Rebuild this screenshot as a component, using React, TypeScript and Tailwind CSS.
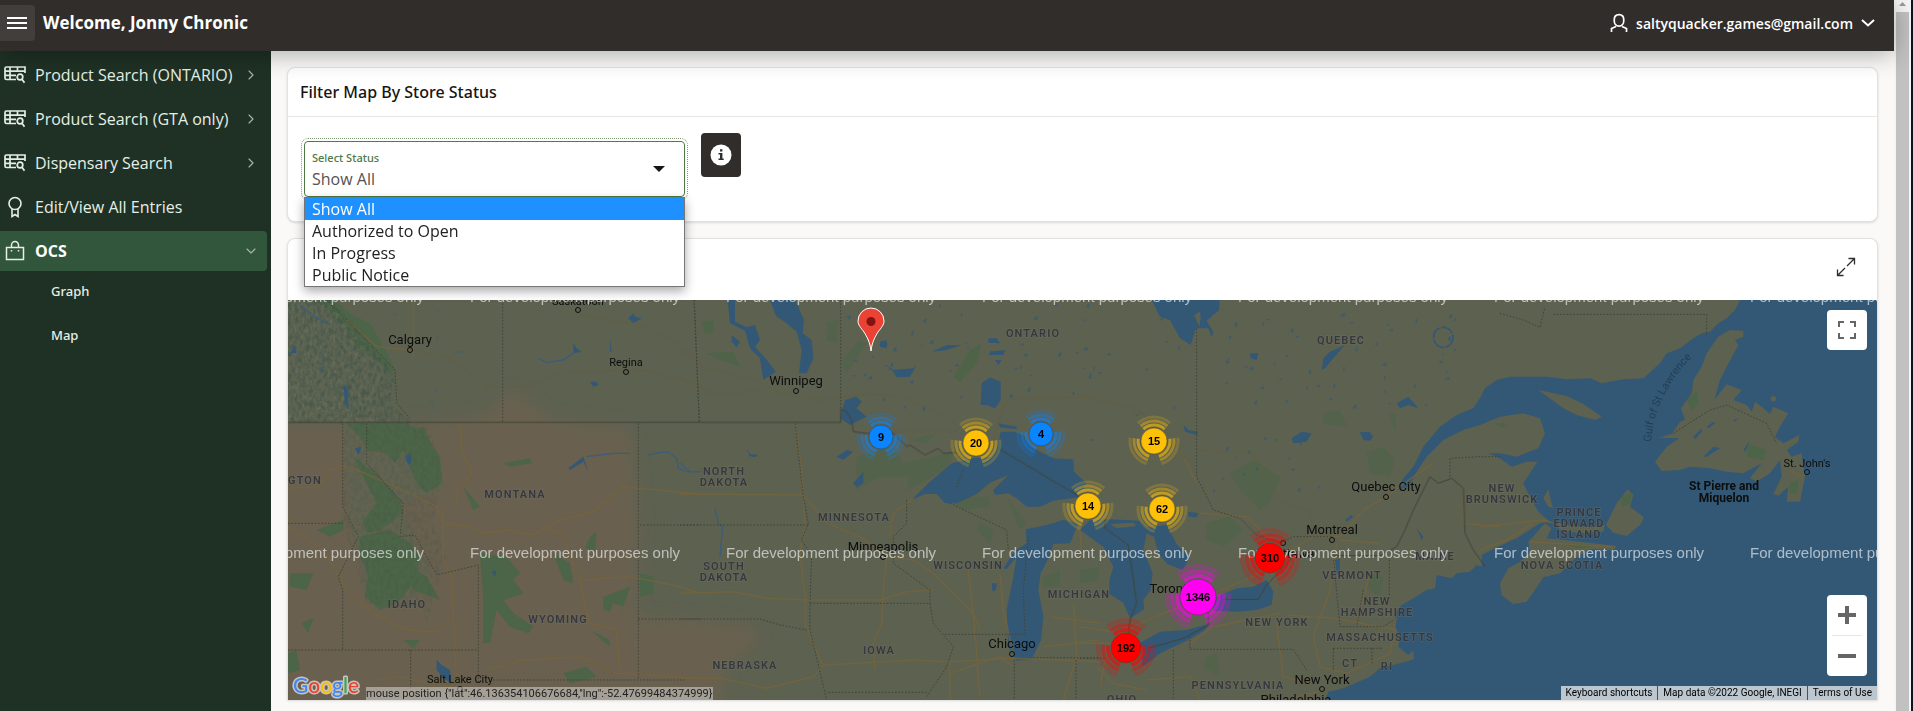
import { useState, type ReactNode } from "react";
import { ChevronDown, ChevronRight } from "lucide-react";

const WATER = "#335875";
const LAND = "#5d6150";
const ROAD = "#77643a";
const BORDER = "#41443a";

function TableSearchIcon() {
  return (
    <svg width="22" height="18" viewBox="0 0 22 18" fill="none" stroke="currentColor" strokeWidth="1.700" aria-hidden="true">
      <path d="M12 13.500H2.500a1.500 1.500 0 0 1-1.500-1.500V2.500A1.500 1.500 0 0 1 2.500 1H21v6M1 5.200h20M1 9.300h11M6 1v12.500M13.500 1v4.500" />
      <circle cx="16" cy="11" r="2.800" />
      <path d="m18 13.300 2.500 3.500" />
    </svg>
  );
}

function AwardIcon() {
  return (
    <svg width="22" height="22" viewBox="0 0 22 22" fill="none" stroke="currentColor" strokeWidth="1.600" aria-hidden="true">
      <circle cx="11" cy="7.500" r="6" />
      <path d="M8 13v7.500l3-2 3 2V13" />
    </svg>
  );
}

function BagIcon() {
  return (
    <svg width="22" height="22" viewBox="0 0 22 22" fill="none" stroke="currentColor" strokeWidth="1.500" aria-hidden="true">
      <path d="M2.500 7.500h17v12h-17zM7.500 7V5a3.500 3.500 0 0 1 7 0v2M7.500 10v1.500M14.500 10v1.500" />
    </svg>
  );
}

function NavLink({ icon, label, arrow }: { icon: ReactNode; label: string; arrow?: boolean }) {
  return (
    <a href="#" className="flex h-10 items-center pl-1 pr-3 text-[#e6efe6]">
      <span className="flex w-[22px] justify-center">{icon}</span>
      <span className="ml-[9px] flex-1 text-[16px] font-medium">{label}</span>
      {arrow && <ChevronRight size={16} strokeWidth={1.75} className="text-[#a3b3a6]" />}
    </a>
  );
}

function Sidebar() {
  return (
    <nav aria-label="Main" className="w-[271px] shrink-0 bg-[#1f3125] pt-1">
      <div className="flex flex-col gap-1">
        <NavLink icon={<TableSearchIcon />} label="Product Search (ONTARIO)" arrow />
        <NavLink icon={<TableSearchIcon />} label="Product Search (GTA only)" arrow />
        <NavLink icon={<TableSearchIcon />} label="Dispensary Search" arrow />
        <NavLink icon={<AwardIcon />} label="Edit/View All Entries" />
        <a href="#" className="mr-1 flex h-10 items-center rounded-r bg-[#32563b] pl-1 pr-2 text-white">
          <span className="flex w-[22px] justify-center text-[#e6efe6]"><BagIcon /></span>
          <span className="ml-[9px] flex-1 text-[16px] font-bold">OCS</span>
          <ChevronDown size={16} strokeWidth={1.75} className="text-[#a3b3a6]" />
        </a>
      </div>
      <a href="#" className="flex h-11 items-center pb-0.5 pl-[51px] font-['Noto_Sans',sans-serif] text-[13px] font-medium text-[#e6efe6]">Graph</a>
      <a href="#" className="flex h-11 items-center pb-0.5 pl-[51px] font-['Noto_Sans',sans-serif] text-[13px] font-medium text-[#e6efe6]">Map</a>
    </nav>
  );
}

function Header() {
  return (
    <header className="relative z-20 flex h-[51px] items-start justify-between bg-[#312d2a] pt-[5px] text-white shadow-[0_4px_24px_rgba(0,0,0,0.3)]">
      <div className="flex h-9 items-center gap-2">
        <button aria-label="Toggle navigation" className="flex h-9 w-[35px] items-center justify-center rounded-r bg-[#423e3b]">
          <svg width="20" height="14" viewBox="0 0 20 14" stroke="white" strokeWidth="2" className="-ml-px" aria-hidden="true">
            <path d="M0 2h20M0 7h20M0 12h20" />
          </svg>
        </button>
        <h1 className="text-[17px] font-bold">Welcome, Jonny Chronic</h1>
      </div>
      <button className="mr-[19px] flex h-9 items-center text-[14px] font-semibold">
        <svg width="18" height="20" viewBox="0 0 18 20" fill="none" stroke="currentColor" strokeWidth="1.700" className="mr-2" aria-hidden="true">
          <path d="M1.500 19v-3.500l4.500-2M16.500 19v-3.500l-4.500-2M9 13.200c-3 0-4.800-2.700-4.800-6S6 1.700 9 1.700s4.800 2.200 4.800 5.500-1.800 6-4.800 6z" />
        </svg>
        saltyquacker.games@gmail.com
        <svg width="14" height="8" viewBox="0 0 14 8" fill="none" stroke="currentColor" strokeWidth="2" className="ml-2" aria-hidden="true">
          <path d="m1 1 6 5.500L13 1" />
        </svg>
      </button>
    </header>
  );
}

const OPTIONS = ["Show All", "Authorized to Open", "In Progress", "Public Notice"];

function FilterCard() {
  const [status, setStatus] = useState(OPTIONS[0]);
  return (
    <section className="rounded-lg border border-[#e4e2df] bg-white shadow-sm">
      <h2 className="flex h-[49px] items-center border-b border-[#e8e6e4] px-3 font-['Noto_Sans',sans-serif] text-[16px] font-medium text-[#161513]">
        Filter Map By Store Status
      </h2>
      <div className="flex items-start gap-4 px-4 pb-6 pt-4">
        <div className="relative mt-2 w-[381px]">
          <div className="flex h-14 flex-col justify-center rounded border border-[#4f7a45] bg-white px-[7px] outline-1 outline-offset-2 outline-dotted outline-[#7d9873]">
            <label htmlFor="status" className="font-['Noto_Sans',sans-serif] text-[11px] font-medium leading-5 text-[#4f7a45]">Select Status</label>
            <select
              id="status"
              value={status}
              onChange={(e) => setStatus(e.target.value)}
              className="h-[22px] appearance-none bg-transparent text-[16px] leading-[22px] text-[#555250] outline-none"
            >
              {OPTIONS.map((o) => <option key={o}>{o}</option>)}
            </select>
          </div>
          <svg width="12" height="6" viewBox="0 0 12 6" className="pointer-events-none absolute right-5 top-[25px]" aria-hidden="true">
            <path d="M0 0h12L6 6z" fill="#161513" />
          </svg>
          <ul role="listbox" aria-label="Select Status" className="absolute left-0 top-14 z-10 w-full border border-[#767676] bg-white text-[16px] leading-[22px] text-[#222] shadow-[0_4px_10px_rgba(0,0,0,0.35)]">
            {OPTIONS.map((o) => (
              <li
                key={o}
                role="option"
                aria-selected={o === status}
                onClick={() => setStatus(o)}
                className={o === status ? "bg-[#1e90ff] px-[7px] text-white" : "px-[7px]"}
              >
                {o}
              </li>
            ))}
          </ul>
        </div>
        <button aria-label="Status information" className="flex h-11 w-10 items-center justify-center rounded bg-[#312d2a]">
          <svg width="22" height="22" viewBox="0 0 22 22" aria-hidden="true">
            <circle cx="11" cy="11" r="10.500" fill="white" />
            <path d="M10 5.300h2.400v2.200H10zM8.500 9h3.900v5.500h1.300V16H8.500v-1.500H10v-4H8.500z" fill="#312d2a" />
          </svg>
        </button>
      </div>
    </section>
  );
}

const FRAME_A = "translate(-8 -10) scale(0.33333)";
const FRAME_B = "translate(392 -10) scale(0.33333)";
const FRAME_C = "translate(792 -10) scale(0.33333)";
const FRAME_D = "translate(1192 -10) scale(0.33333)";

function scatter(count: number, x0: number, y0: number, w: number, h: number, seed: number) {
  let s = seed;
  const next = () => {
    s = (s * 16807) % 2147483647;
    return s / 2147483647;
  };
  return Array.from({ length: count }, () => {
    const x = x0 + next() * w;
    const y = y0 + next() * h;
    const a = 2 + next() * 9;
    const b = 2 + next() * 10;
    return `M${x.toFixed(0)} ${y.toFixed(0)}l${a.toFixed(0)} -${b.toFixed(0)} 4 3 -3 ${b.toFixed(0)}z`;
  }).join("");
}

function Terrain() {
  return (
    <>
      <defs>
        <filter id="relief" x="0" y="0" width="100%" height="100%" colorInterpolationFilters="sRGB">
          <feTurbulence type="fractalNoise" baseFrequency="0.09 0.06" numOctaves="4" seed="6" result="noise" />
          <feColorMatrix in="noise" type="matrix" values="0 0 0 0 0.26  0 0 0 0 0.33  0 0 0 0 0.29  3 0 0 0 -1.2" result="tone" />
          <feComposite in="tone" in2="SourceAlpha" operator="in" />
        </filter>
        <filter id="ridge" x="0" y="0" width="100%" height="100%" colorInterpolationFilters="sRGB">
          <feTurbulence type="fractalNoise" baseFrequency="0.12 0.06" numOctaves="3" seed="21" result="noise" />
          <feColorMatrix in="noise" type="matrix" values="0 0 0 0 0.46  0 0 0 0 0.47  0 0 0 0 0.37  4 0 0 0 -2" result="tone" />
          <feComposite in="tone" in2="SourceAlpha" operator="in" />
        </filter>
        <filter id="soft" x="-10%" y="-10%" width="120%" height="120%">
          <feGaussianBlur stdDeviation="22" />
        </filter>
      </defs>
      <rect width="1589" height="400" fill={LAND} />
      <g transform={FRAME_A}>
        <path d="M-60 400H440L600 380 700 300 820 390 1050 410 1080 700 1070 980 1260 990 1420 1010 1440 1060 1330 1130 1320 1300H-60z" fill="#696050" filter="url(#soft)" />
        <path d="M24 30H170L250 130 330 200 350 340 390 400 440 440 480 520 490 600 430 620 360 640 400 740 450 850 430 900 330 960 260 930 240 800 210 700 190 400H24z" fill="#5b6551" opacity="0.5" />
        <g fill="#4c6447">
          <path d="M110 30H165L215 75 270 100 320 190 345 240 330 250 280 200 240 180 180 100z" />
          <path d="M200 400 380 398 440 440 480 500 485 580 440 610 410 580 390 530 370 480 345 520 320 490 260 480 240 440z" />
          <path d="M220 500 300 560 360 630 370 670 300 720 260 730 250 690 290 640 260 580z" />
          <path d="M240 740 330 720 390 760 420 800 400 880 350 940 300 960 255 920 265 850 240 800z" />
          <path d="M370 820 440 860 480 930 400 900zM600 790 680 800 720 850 700 870 730 910 670 930 700 970 760 1010 745 1030 690 1010 650 960 630 1060 610 1060 610 930z" />
          <path d="M820 790 870 820 880 880 850 870zM1080 850 1120 860 1120 910 1080 920zM970 920 1050 890 1030 950 1000 940 990 965 970 960zM930 740 950 725 945 780 915 775zM550 590 600 650 580 660zM670 520 750 505 755 520 690 530zM400 420 430 410 480 520z" />
          <path d="M110 720 190 690 190 720 150 740zM30 850 100 850 80 900 30 890zM65 1000 100 985 85 1030zM370 1050 420 1050 400 1075zM850 1150 920 1130 950 1160 870 1180zM930 1020 990 1050 990 1070zM24 1090 50 1080 60 1140 24 1150z" />
        </g>
        <path d="M24 30H150L240 120 300 200 345 250 340 350 400 400H24z" filter="url(#relief)" opacity="0.7" />
        <path d="M24 30H130L220 120 270 200 300 250 290 350 300 400H24z" filter="url(#ridge)" opacity="0.4" />
        <path d="M190 400 440 400 490 540 460 700 500 800 440 1000 430 960 260 940 190 700z" filter="url(#relief)" opacity="0.25" />
        <g fill={WATER}>
          <path d="M1045 85 1060 70 1065 80 1085 85 1060 100zM930 275 950 275 955 285 940 290zM375 500 390 490 395 515 385 525zM225 475 245 470 235 495zM470 1110 485 1125 510 1140 515 1180 490 1165 470 1140zM45 165 50 190 30 190zM190 280 205 300 205 360 195 340zM635 845 650 840 645 860zM990 150 995 185 990 185z" />
          <path d="M865 535 910 500 925 545 910 515 870 540zM880 160 890 175 905 185 880 190z" />
        </g>
        <path d="M1105 495 1140 487 1165 487 1190 505 1195 535 1220 545 1260 545M775 205 800 218 850 210 880 190M920 500 1000 490 1050 490M60 45 105 80 150 105M130 190 130 250" stroke="#3b5d7a" strokeWidth="4" fill="none" />
        <path d={scatter(20, 40, 50, 500, 330, 12)} fill="#3f5f74" opacity="0.5" />
      </g>
      <g transform={FRAME_B}>
        <g fill="#4c6447">
          <path d="M820 260 870 180 905 160 890 220 840 275zM65 95 100 90 100 130 75 130zM80 190 160 185 180 230 120 210z" opacity="0.8" />
          <path d="M440 100 475 90 470 160 440 150zM480 220 540 150 560 160 500 250zM530 500 600 480 640 470 670 520 760 500 830 480 800 530 740 570 680 600 690 560 600 560 530 600zM690 450 770 430 740 460zM820 640 870 620 930 620 930 650 850 660zM980 620 1040 700 1020 720zM900 700 940 720 930 760 890 720zM1090 860 1140 840 1140 890 1090 890z" opacity="0.6" />
        </g>
        <g fill={WATER}>
          <path d="M143 30 165 30 165 95 200 112 225 105 240 150 225 170 262 212 287 245 250 270 240 205 210 175 195 122 150 100z" />
          <path d="M270 30H345L372 90 368 130 395 150 400 205 380 250 357 250 365 180 350 125 318 98 288 78z" />
          <path d="M155 135 180 155 170 172 155 155zM905 280 930 262 962 275 962 330 945 355 920 345 902 345zM480 385 495 330 530 320 545 335 530 355 560 380 510 405zM470 500 500 480 520 485 490 510zM520 580 550 545 550 580 530 592zM600 155 620 150 620 175 600 170z" />
          <path d="M620 225 640 240 700 235 710 225 690 260 650 262 640 245zM755 185 800 165 845 165 800 180zM930 185 975 180 970 195 930 195zM945 210 965 210 955 225zM925 145 950 145 960 160 925 158z" />
          <path d="M695 630 750 575 815 520 880 505 935 500 950 480 962 425 1000 425 1030 435 1060 475 1120 505 1180 508 1182 545 1220 580 1195 622 1120 632 1080 650 1040 650 1010 625 985 610 945 615 940 600 985 555 930 578 890 612 830 640 795 640 770 612 735 612z" />
          <path d="M1037 718 1100 705 1150 690 1195 700 1170 760 1120 762 1108 800 1082 850 1075 900 1090 980 1083 1050 1055 1108 1010 1112 985 1070 980 960 1000 860 1010 800 980 838 970 835 1005 782 1040 760z" />
          <path d="M935 880 950 880 948 900 938 905zM955 400 1010 410 1010 418 960 412zM200 475 210 492 235 495 225 502 208 498z" />
        </g>
        <path d="M105 655 115 700 128 710 120 800M0 520 30 545 65 545" stroke="#3b5d7a" strokeWidth="4" fill="none" />
        <path d={scatter(50, 500, 40, 740, 330, 77)} fill={WATER} opacity="0.7" />
      </g>
      <g transform={FRAME_C}>
        <g fill="#4c6447" opacity="0.6">
          <path d="M450 550 520 510 600 560 570 640 540 660 480 600zM860 490 910 470 945 510 930 560 870 550zM380 700 450 680 490 720 430 770 380 750zM730 370 780 360 800 410 730 400zM930 370 950 370 945 430zM0 840 60 830 50 870 0 880zM860 850 910 860 900 920 870 900zM380 1100 410 1090 420 1160 370 1130z" />
        </g>
        <g fill={WATER}>
          <path d="M215 30 240 80 270 90 300 145 332 165 348 115 385 115 395 142 400 125 380 92 418 60V30z" />
          <path d="M725 240 730 205 750 185 795 165 760 205 735 235zM840 427 868 425 880 440 870 452 850 450zM310 405 325 420 355 425 350 435 315 425zM635 445 665 425 695 430 680 455 640 460zM510 190 535 190 530 210 512 205zM325 665 355 670 350 682 325 680zM950 340 985 320 1015 355 985 345 960 355z" />
          <path d="M0 720 30 690 90 688 180 692 200 712 260 705 290 762 330 802 308 840 262 822 235 790 222 740 200 730 190 780 218 850 212 900 190 930 192 958 150 985 130 938 88 912 88 870 100 830 70 770z" />
          <path d="M185 1130 190 1085 178 1060 240 1025 320 1020 392 1000 372 1022 320 1052 240 1090 200 1122z" />
          <path d="M400 962 400 925 470 895 520 890 560 870 580 905 575 945 530 960 470 965z" />
          <path d="M765 810 780 805 778 860 770 850zM795 690 815 675 820 680 800 695zM1010 715 1030 740 1025 750z" />
          <path d="M1980 30 1965 60 1940 85 1915 100 1890 125 1865 130 1840 145 1800 175 1760 190 1740 220 1690 265 1630 268 1565 280 1530 265 1460 268 1400 260 1290 260 1250 270 1215 295 1200 325 1180 355 1130 375 1080 410 1030 470 1000 530 970 565 950 600 985 590 1010 545 1040 500 1090 450 1150 420 1200 405 1260 380 1330 370 1380 385 1395 430 1375 475 1310 500 1260 490 1225 490 1260 505 1295 530 1340 515 1372 515 1350 550 1330 580 1350 620 1375 665 1410 695 1380 700 1310 745 1250 772 1205 795 1205 830 1190 825 1170 845 1130 850 1115 865 1070 855 1065 895 1040 900 1000 925 965 945 945 970 945 1010 960 1040 955 1070 985 1095 1000 1080 1002 1108 960 1120 900 1135 870 1160 790 1195 745 1205 735 1235H2500V30z" />
        </g>
        <path d="M342 75 360 65 362 85 358 110zM90 702 160 698 170 708 110 715z" fill={LAND} />
        <ellipse cx="1090" cy="142" rx="29" ry="30" fill="none" stroke={WATER} strokeWidth="5" strokeDasharray="40 4" />
        <path d={scatter(50, 430, 60, 700, 300, 901)} fill={WATER} opacity="0.65" />
        <path d={scatter(14, 400, 440, 320, 180, 45)} fill={WATER} opacity="0.65" />
        <path d={scatter(10, 10, 60, 300, 400, 31)} fill={WATER} opacity="0.65" />
      </g>
      <g transform={FRAME_D}>
        <g fill={LAND}>
          <path d="M175 300 260 318 310 342 365 380 345 390 290 375 250 355z" />
          <path d="M190 625 205 598 215 640 220 655 205 650zM225 695 260 705 330 712 375 705 370 725 300 730 240 720z" />
          <path d="M195 700 215 715 200 745 300 755 410 768 400 780 330 778 285 805 270 822 240 850 190 862 165 900 140 935 100 943 65 915 60 880 85 835 120 815 150 790 145 755z" />
          <path d="M443 598 460 615 450 650 492 682 480 705 440 738 400 728 378 705 410 640z" />
          <path d="M545 543 525 515 560 470 598 445 535 443 575 432 600 395 615 390 603 355 635 310 640 270 665 230 680 190 715 140 750 120 790 122 790 140 765 150 775 165 740 230 720 270 703 330 740 283 785 300 760 330 800 345 815 365 825 335 845 350 870 372 880 350 925 370 900 410 885 440 910 460 958 435 955 455 920 480 935 500 965 490 970 530 975 560 960 635 920 635 925 590 895 617 880 612 905 560 900 510 870 550 830 575 810 565 845 520 790 550 740 545 690 535 630 530 600 540z" />
          <circle cx="880" cy="326" r="8" />
        </g>
        <path d="M620 330 650 305 655 340 635 360zM800 460 860 480 850 510 800 500zM425 620 455 610 450 640 425 650zM930 580 955 570 950 610 930 610zM40 400 80 400 70 412zM240 760 350 765 300 775z" fill="#4c6447" />
        <path d="M680 410 700 395 705 400 685 415zM640 440 665 415 665 425 645 448zM670 500 700 470 720 475 680 500zM790 480 810 450 795 485zM760 390 775 385 765 395z" fill={WATER} />
      </g>
    </>
  );
}

function RoadsAndBorders() {
  return (
    <g fill="none" strokeLinejoin="round">
      <g stroke={ROAD} strokeWidth="4.500" opacity="0.75">
        <g transform={FRAME_A}>
          <path d="M400 30V200M400 180 290 170 200 90M540 400 545 480 575 550 535 600 530 640M24 595 120 590 150 540 210 530 300 570 390 610 470 650 490 700 570 710 610 730 680 720 760 735 840 690 940 665 1030 590 1260 612M490 650 490 810 515 860 525 1080 530 1190M800 720 850 730 880 830 900 870 1050 860 1180 885 1260 910M900 870 915 950 930 1000 1010 1020 1020 1150M24 710 130 780 200 900 280 970 380 1020 470 1025 520 980M620 1140 730 1110 900 1100 1010 1150 1260 1165M24 690H50M290 1170 360 1160 440 1180 520 1190" />
        </g>
        <g transform={FRAME_B}>
          <path d="M0 612 370 615M345 405 365 540 375 720 360 780 375 920 375 1000 430 1130M370 615 440 700 540 740 620 800 700 810 760 850 880 970 900 1020M620 800 610 900 605 1000 580 1060 585 1140M0 910 160 905 260 925 380 930 600 930 680 905 760 900M630 740 640 670 700 625M0 1165 120 1165 260 1195 400 1160 430 1125 700 1110 810 1115 1000 1105 1130 1110 1260 1115M865 840 880 970 900 1220M810 1115V1230M810 1150 960 1100 1000 1130M960 850 970 960 1000 1090M1110 980 1260 1000M1090 1070 1260 1050M1180 940 1190 1100 1150 1230M1200 720 1205 800" />
        </g>
        <g transform={FRAME_C}>
          <path d="M300 480 350 580M360 670 500 680 560 740M400 910 520 860 600 800 700 740 780 740 850 660 920 620 1000 560 1060 520M780 750 900 760M770 760 750 900 700 1040 720 1130 800 1150 930 1090 950 980M600 970 500 990 400 1010 330 1060M620 975 760 985 950 1020M590 1000 610 1160 690 1180M830 1000 870 850M0 1010 130 1030 180 1000 300 950M0 1060H120M80 1090 60 1190M200 1170 330 1160 360 1230M50 1130 100 1180 200 1200M620 1230 730 1200M1150 590 1150 700 1260 710" />
        </g>
        <g transform={FRAME_D}>
          <path d="M0 710 100 700 190 690 220 700M0 780 80 750 160 700M150 755 300 765 400 770M930 540 960 560 975 545" />
        </g>
      </g>
      <g stroke="#67603f" strokeWidth="3" opacity="0.7">
        <g transform={FRAME_A}><path d="M400 180 500 200 560 240 620 290 740 290 860 245 1100 240 1260 285M900 75 1060 100 1160 140 1260 210" /></g>
        <g transform={FRAME_B}><path d="M0 180 80 235 230 270 300 310 430 330 560 310 660 320 780 370 860 420M0 260 100 315 260 300M940 450 960 380 980 330 1260 318M640 425H830" /></g>
        <g transform={FRAME_C}><path d="M0 318 160 355 280 440 310 500M360 480 520 490 600 630 680 660 700 700" /></g>
      </g>
      <g stroke={BORDER} strokeWidth="3">
        <g transform={FRAME_A}><path d="M24 397H1260" /></g>
        <g transform={FRAME_B}>
          <path d="M60 397H482V357L500 365 515 390 520 425 560 430 640 430 680 470 690 465 735 495 775 475 790 490 830 488M960 478 1190 615 1215 650" />
        </g>
        <g transform={FRAME_C}>
          <path d="M75 690 75 715 145 765 170 940 150 990 145 1030M205 1075 310 1045 385 1005 385 960M430 928H535L560 885 640 800M760 797H900L950 770 975 720 1000 660 1050 560 1075 580 1115 565 1150 595 1155 730 1180 780 1215 830" />
        </g>
      </g>
      <g stroke={BORDER} strokeWidth="3" strokeDasharray="5 5">
        <g transform={FRAME_A}>
          <path d="M668 30V397M1243 30 1258 397M140 30 240 130 345 240 350 340 390 385M188 400V650L235 740 175 860 188 900V1080M24 700H190M260 400V520L370 640 360 740 405 735 470 855 595 825V1180M24 1080H595M392 1080V1200M1075 400V1170M1080 705H1260M1075 987H1260M640 1170H1220" />
        </g>
        <g transform={FRAME_B}>
          <path d="M42 30 58 397M482 30V357M345 400 370 620 385 700 365 750 395 800 390 940 390 1020 440 1230M0 705H385M0 987H240L300 1005 380 1020M390 940H750L760 1000 820 1070 800 1130 740 1220M445 1207H740M680 630V700L640 740 640 820 750 900 750 940M795 1033H1035L1030 900 1045 740M810 640 980 720 985 780M850 540 830 590M1003 1110V1230M1188 1110V1230M1060 1103H1260" />
        </g>
        <g transform={FRAME_C}>
          <path d="M350 115V560L400 660 480 685 530 735 600 760 640 740 760 740M280 1080V1230M330 1078H640L680 1140M330 1040V1078M760 800 780 1010H910L940 990M928 800V930M850 900 830 1010M760 1075H905M760 1075V1140M876 1075V1120M1110 560V505L1200 500 1260 500M0 1105H80" />
        </g>
        <g transform={FRAME_D}>
          <path d="M220 73H680V135M60 70 130 90 180 112 195 50M580 430 690 360 740 345 860 400 890 460" />
        </g>
      </g>
    </g>
  );
}

const REGIONS: [number, number, string][] = [
  [745, 37, "ONTARIO"], [1053, 44, "QUEBEC"], [17, 184, "GTON"], [227, 198, "MONTANA"], [436, 175, "NORTH"], [436, 186, "DAKOTA"],
  [566, 221, "MINNESOTA"], [436, 270, "SOUTH"], [436, 281, "DAKOTA"], [680, 269, "WISCONSIN"], [119, 308, "IDAHO"], [270, 323, "WYOMING"],
  [791, 298, "MICHIGAN"], [591, 354, "IOWA"], [457, 369, "NEBRASKA"], [989, 326, "NEW YORK"], [1064, 279, "VERMONT"],
  [1147, 260, "MAINE"], [1089, 305, "NEW"], [1089, 316, "HAMPSHIRE"], [1092, 341, "MASSACHUSETTS"], [1062, 367, "CT"], [1099, 370, "RI"],
  [950, 389, "PENNSYLVANIA"], [834, 403, "OHIO"], [1214, 192, "NEW"], [1214, 203, "BRUNSWICK"], [1291, 216, "PRINCE"],
  [1291, 227, "EDWARD"], [1291, 238, "ISLAND"], [1274, 269, "NOVA SCOTIA"],
];

const CITIES: [number, number, string, number, number, number][] = [
  [122, 44, "Calgary", 13, 122, 50], [290, 5, "Saskatoon", 11, 290, 10], [338, 66, "Regina", 11, 338, 72],
  [508, 85, "Winnipeg", 13, 508, 91], [595, 251, "Minneapolis", 13, 595, 257], [172, 383, "Salt Lake City", 11, 172, 389],
  [724, 348, "Chicago", 13, 724, 354], [1098, 191, "Quebec City", 13, 1098, 197], [1044, 234, "Montreal", 13, 1044, 240],
  [884, 293, "Toronto", 13, 900, 296], [1006, 258, "Ottawa", 13, 995, 243], [1034, 384, "New York", 13, 1034, 389],
  [1008, 404, "Philadelphia", 13, 1008, 415], [1519, 167, "St. John's", 11, 1519, 172],
];

function MapLabels() {
  return (
    <g textAnchor="middle" className="font-[Roboto,sans-serif]">
      <g className="text-[11px] font-semibold tracking-widest" fill="#36383f" stroke="#77796b" strokeWidth="1.500" strokeOpacity="0.35" paintOrder="stroke">
        {REGIONS.map(([x, y, name]) => <text key={name + y + x} x={x} y={y}>{name}</text>)}
      </g>
      <g fill="#0c0d0d">
        {CITIES.map(([x, y, name, size, cx, cy]) => (
          <g key={name}>
            <text x={x} y={y} fontSize={size}>{name}</text>
            <circle cx={cx} cy={cy} r="2.500" fill="none" stroke="#0c0d0d" strokeWidth="1" />
          </g>
        ))}
        <text x="1436" y="190" fontSize="12" fontWeight="700">St Pierre and</text>
        <text x="1436" y="202" fontSize="12" fontWeight="700">Miquelon</text>
      </g>
      <path id="gulf" d="M1363 142C1365 108 1382 80 1403 58" fill="none" />
      <text fontSize="11" fill="#243f55" textAnchor="start"><textPath href="#gulf">Gulf of St Lawrence</textPath></text>
    </g>
  );
}

function arc(r: number, from: number, to: number) {
  const rad = Math.PI / 180;
  const p = (a: number) => `${(r * Math.cos(a * rad)).toFixed(1)} ${(r * Math.sin(a * rad)).toFixed(1)}`;
  return `M${p(from)}A${r} ${r} 0 0 1 ${p(to)}`;
}

const CLUSTERS: [number, number, number, string, number][] = [
  [593, 137, 12, "#0a84ff", 9], [688, 143, 13, "#ffc107", 20], [753, 134, 12, "#0a84ff", 4], [800, 206, 13, "#ffc107", 14],
  [866, 141, 13, "#ffc107", 15], [874, 209, 13, "#ffc107", 62], [982, 258, 15, "#ff0000", 310], [838, 348, 15, "#ff0000", 192],
  [910, 297, 18, "#ff00f0", 1346],
];

function Cluster({ x, y, r, color, count }: { x: number; y: number; r: number; color: string; count: number }) {
  const step = r > 14 ? 5 : 4;
  return (
    <g transform={`translate(${x} ${y})`}>
      {[0.6, 0.4, 0.2].map((opacity, i) => {
        const radius = r + 3 + i * step;
        return (
          <path
            key={opacity}
            d={arc(radius, -132, -48) + arc(radius, -8, 72) + arc(radius, 108, 188)}
            fill="none"
            stroke={color}
            strokeWidth={step - 1}
            opacity={opacity}
          />
        );
      })}
      <circle r={r} fill={color} stroke="#3a3a2a" strokeOpacity="0.5" strokeWidth="0.800" />
      <text y="4" textAnchor="middle" fontSize="11" fontWeight="700" className="font-['Liberation_Sans',sans-serif]">{count}</text>
    </g>
  );
}

function MapCanvas() {
  const columns = [-74, 182, 438, 694, 950, 1206, 1462];
  return (
    <svg viewBox="0 0 1589 400" preserveAspectRatio="xMidYMid slice" className="block h-full w-full" role="img" aria-label="Store map">
      <Terrain />
      <RoadsAndBorders />
      <MapLabels />
      <g fill="#ffffff" opacity="0.6" className="font-['Liberation_Sans',sans-serif]" fontSize="15">
        {[2, 258].map((y) => columns.map((x) => <text key={`${x}-${y}`} x={x} y={y}>For development purposes only</text>))}
      </g>
      {CLUSTERS.map(([x, y, r, color, count]) => <Cluster key={count} x={x} y={y} r={r} color={color} count={count} />)}
      <path d="M583 51c-1-9-4-14-7-19-3-4-6-7-6-11a13 13 0 0 1 26 0c0 4-3 7-6 11-3 5-6 10-7 19z" fill="#ea4335" stroke="white" strokeWidth="1" />
      <circle cx="583" cy="21.500" r="4.500" fill="#811411" />
      <text x="5" y="393" fontSize="21" fontWeight="500" stroke="#c9c5bd" strokeWidth="3" paintOrder="stroke" strokeLinejoin="round" className="font-[Lato,sans-serif]">
        <tspan fill="#4285f4">G</tspan><tspan fill="#ea4335">o</tspan><tspan fill="#fbbc04">o</tspan><tspan fill="#4285f4">g</tspan><tspan fill="#34a853">l</tspan><tspan fill="#ea4335">e</tspan>
      </text>
    </svg>
  );
}

function MapCard() {
  return (
    <section className="rounded-t-lg border border-b-0 border-[#e4e2df] bg-white shadow-sm">
      <div className="flex h-[61px] items-center justify-end pb-1.5 pr-[21px]">
        <button aria-label="Maximize">
          <svg width="20" height="20" viewBox="0 0 20 20" fill="none" stroke="#312d2a" strokeWidth="1.300" aria-hidden="true">
            <path d="M11 9l7-7M12.500 1.500h6v6M9 11l-7 7M1.500 12.500v6h6" />
          </svg>
        </button>
      </div>
      <div className="relative h-[400px] overflow-hidden">
        <MapCanvas />
        <button aria-label="Toggle fullscreen view" className="absolute right-2.5 top-2.5 flex h-10 w-10 items-center justify-center rounded-sm bg-white">
          <svg width="18" height="18" viewBox="0 0 18 18" fill="#666" aria-hidden="true">
            <path d="M0 0v6h2V2h4V0H0zm16 0h-4v2h4v4h2V0h-2zm0 16h-4v2h6v-6h-2v4zM2 12H0v6h6v-2H2v-4z" />
          </svg>
        </button>
        <div className="absolute bottom-6 right-2.5 flex w-10 flex-col items-center rounded-sm bg-white">
          <button aria-label="Zoom in" className="flex h-10 w-10 items-center justify-center">
            <svg width="18" height="18" viewBox="0 0 18 18" fill="#666" aria-hidden="true"><path d="M18 7h-7V0H7v7H0v4h7v7h4v-7h7z" /></svg>
          </button>
          <span className="h-px w-[30px] bg-[#e6e6e6]" />
          <button aria-label="Zoom out" className="flex h-10 w-10 items-center justify-center">
            <svg width="18" height="18" viewBox="0 0 18 18" fill="#666" aria-hidden="true"><path d="M0 7h18v4H0z" /></svg>
          </button>
        </div>
        <p className="absolute bottom-0 left-[78px] h-[13px] whitespace-nowrap bg-white/40 font-[Roboto,sans-serif] text-[11px] leading-[13px] text-[#222]">
          {'mouse position {"lat":46.136354106676684,"lng":-52.47699484374999}'}
        </p>
        <div className="absolute bottom-0 right-0 flex h-3.5 gap-px font-[Roboto,sans-serif] text-[10px] leading-[14px] text-black">
          <button className="bg-[#f5f5f5]/70 px-[5px]">Keyboard shortcuts</button>
          <span className="bg-[#f5f5f5]/70 px-[5px]">Map data ©2022 Google, INEGI</span>
          <a href="#" className="bg-[#f5f5f5]/70 px-[5px]">Terms of Use</a>
        </div>
      </div>
    </section>
  );
}

export default function App() {
  return (
    <div className="flex h-screen overflow-hidden bg-[#faf9f8] font-['Open_Sans',sans-serif]">
      <div className="flex min-w-0 flex-1 flex-col">
        <Header />
        <div className="flex min-h-0 flex-1">
          <Sidebar />
          <main className="flex min-w-0 flex-1 flex-col gap-4 px-4 pt-4">
            <FilterCard />
            <MapCard />
          </main>
        </div>
      </div>
      <div className="flex w-[17px] flex-col items-center bg-[#f5f5f5]" aria-hidden="true">
        <svg width="7" height="12" viewBox="0 0 7 12"><path d="M0 6h7L3.500 2z" fill="#9a9a9a" /></svg>
        <div className="w-[13px] flex-1 bg-[#c1c1c1]" />
      </div>
      <div className="w-0.5 bg-[#10131f]" />
    </div>
  );
}
